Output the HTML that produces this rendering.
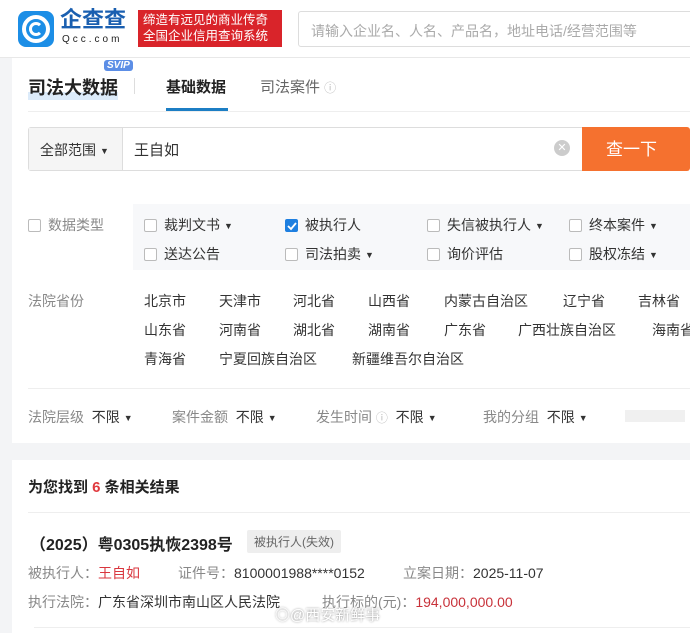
<!DOCTYPE html>
<html><head><meta charset="utf-8"><style>
*{margin:0;padding:0;box-sizing:border-box}
body{width:690px;height:633px;overflow:hidden;background:#f3f4f6;font-family:"Liberation Sans","Noto Sans CJK SC",sans-serif;color:#333;position:relative}
.a{position:absolute;white-space:nowrap}
.g{color:#888}
.cb{display:inline-block;width:13px;height:13px;border:1px solid #bbb;border-radius:2px;background:#fff;vertical-align:-2px;margin-right:7px}
.ck{background:#1e7fe0;border-color:#1e7fe0;position:relative}
.tri{font-size:9px;margin-left:4px;vertical-align:1px}
</style></head><body>
<div class="a" style="left:0;top:0;width:690px;height:58px;background:#fff;border-bottom:1px solid #e8e8e8"></div>
<div class="a" style="left:18px;top:11px;width:36px;height:36px;border-radius:8px;background:#1c8ee6"></div>
<div class="a" style="left:22px;top:15px;width:28px;height:28px;border-radius:50%;border:4px solid #fff"></div>
<div class="a" style="left:29px;top:22px;width:14px;height:14px;border-radius:50%;border:3px solid #fff;border-right-color:transparent"></div>
<div class="a" style="left:60px;top:5px;font-size:22px;line-height:30px;font-weight:bold;color:#1a5fb0">企查查</div>
<div class="a" style="left:62px;top:34px;font-size:10px;line-height:12px;letter-spacing:3px;color:#222">Qcc.com</div>
<div class="a" style="left:138px;top:10px;width:144px;height:37px;background:#d9242a;color:#fff;font-size:12.5px;line-height:16px;padding:2px 5px">缔造有远见的商业传奇<br>全国企业信用查询系统</div>
<div class="a" style="left:298px;top:11px;width:400px;height:36px;border:1px solid #ddd;border-radius:3px;padding:9px 12px;font-size:14px;color:#aaa">请输入企业名、人名、产品名，地址电话/经营范围等</div>
<div class="a" style="left:12px;top:58px;width:690px;height:385px;background:#fff"></div>
<div class="a" style="left:28px;top:74px;font-size:18px;font-weight:bold;color:#222;background:linear-gradient(transparent 70%,#dcebfa 70%)">司法大数据</div>
<div class="a" style="left:104px;top:60px;background:#5c8ee6;color:#fff;font-size:10px;font-weight:bold;font-style:italic;padding:0 3px;border-radius:3px">SVIP</div>
<div class="a" style="left:134px;top:78px;width:1px;height:16px;background:#ddd"></div>
<div class="a" style="left:166px;top:76px;font-size:15px;font-weight:bold;color:#222">基础数据</div>
<div class="a" style="left:166px;top:108px;width:62px;height:3px;background:#1c7ec4"></div>
<div class="a" style="left:260px;top:76px;font-size:15px;color:#666">司法案件 <span style="font-size:12px;color:#bbb">ⓘ</span></div>
<div class="a" style="left:28px;top:111px;width:662px;height:1px;background:#eee"></div>
<div class="a" style="left:28px;top:127px;width:556px;height:44px;border:1px solid #ddd;border-radius:3px"></div>
<div class="a" style="left:29px;top:128px;width:94px;height:42px;background:#f5f5f5;border-right:1px solid #ddd;font-size:14px;padding:12px 11px">全部范围<span class="tri">▼</span></div>
<div class="a" style="left:134px;top:139px;font-size:15px">王自如</div>
<div class="a" style="left:554px;top:140px;width:16px;height:16px;border-radius:50%;background:#ccc;color:#fff;font-size:11px;text-align:center;line-height:16px">✕</div>
<div class="a" style="left:582px;top:127px;width:108px;height:44px;background:#f5712f;color:#fff;font-size:17px;padding:8px 24px;border-radius:0 3px 3px 0">查一下</div>
<div class="a" style="left:133px;top:204px;width:557px;height:66px;background:#f7f8fa"></div>
<div class="a g" style="left:28px;top:215px;font-size:14px"><span class="cb"></span>数据类型</div>
<div class="a" style="left:144px;top:215px;font-size:14px"><span class="cb"></span>裁判文书<span class="tri">▼</span></div>
<div class="a" style="left:285px;top:215px;font-size:14px"><span class="cb ck"><svg width="11" height="11" style="position:absolute;left:0;top:0"><path d="M2 6l3 3 5-6" stroke="#fff" stroke-width="1.8" fill="none"/></svg></span>被执行人</div>
<div class="a" style="left:427px;top:215px;font-size:14px"><span class="cb"></span>失信被执行人<span class="tri">▼</span></div>
<div class="a" style="left:569px;top:215px;font-size:14px"><span class="cb"></span>终本案件<span class="tri">▼</span></div>
<div class="a" style="left:144px;top:244px;font-size:14px"><span class="cb"></span>送达公告</div>
<div class="a" style="left:285px;top:244px;font-size:14px"><span class="cb"></span>司法拍卖<span class="tri">▼</span></div>
<div class="a" style="left:427px;top:244px;font-size:14px"><span class="cb"></span>询价评估</div>
<div class="a" style="left:569px;top:244px;font-size:14px"><span class="cb"></span>股权冻结<span class="tri">▼</span></div>
<div class="a g" style="left:28px;top:291px;font-size:14px">法院省份</div>
<div class="a" style="left:144px;top:291px;font-size:14px">北京市</div>
<div class="a" style="left:219px;top:291px;font-size:14px">天津市</div>
<div class="a" style="left:293px;top:291px;font-size:14px">河北省</div>
<div class="a" style="left:368px;top:291px;font-size:14px">山西省</div>
<div class="a" style="left:444px;top:291px;font-size:14px">内蒙古自治区</div>
<div class="a" style="left:563px;top:291px;font-size:14px">辽宁省</div>
<div class="a" style="left:638px;top:291px;font-size:14px">吉林省</div>
<div class="a" style="left:144px;top:320px;font-size:14px">山东省</div>
<div class="a" style="left:219px;top:320px;font-size:14px">河南省</div>
<div class="a" style="left:293px;top:320px;font-size:14px">湖北省</div>
<div class="a" style="left:368px;top:320px;font-size:14px">湖南省</div>
<div class="a" style="left:444px;top:320px;font-size:14px">广东省</div>
<div class="a" style="left:518px;top:320px;font-size:14px">广西壮族自治区</div>
<div class="a" style="left:652px;top:320px;font-size:14px">海南省</div>
<div class="a" style="left:144px;top:349px;font-size:14px">青海省</div>
<div class="a" style="left:219px;top:349px;font-size:14px">宁夏回族自治区</div>
<div class="a" style="left:352px;top:349px;font-size:14px">新疆维吾尔自治区</div>
<div class="a" style="left:28px;top:388px;width:662px;height:1px;background:#eee"></div>
<div class="a" style="left:28px;top:407px;font-size:14px"><span class="g">法院层级</span>&nbsp; 不限<span class="tri">▼</span></div>
<div class="a" style="left:172px;top:407px;font-size:14px"><span class="g">案件金额</span>&nbsp; 不限<span class="tri">▼</span></div>
<div class="a" style="left:316px;top:407px;font-size:14px"><span class="g">发生时间 <span style="font-size:12px;color:#bbb">ⓘ</span></span>&nbsp; 不限<span class="tri">▼</span></div>
<div class="a" style="left:483px;top:407px;font-size:14px"><span class="g">我的分组</span>&nbsp; 不限<span class="tri">▼</span></div>
<div class="a" style="left:625px;top:410px;width:60px;height:12px;background:#f0f0f0"></div>
<div class="a" style="left:12px;top:460px;width:690px;height:173px;background:#fff"></div>
<div class="a" style="left:28px;top:476px;font-size:15px;font-weight:bold;color:#222">为您找到 <span style="color:#e0393e">6</span> 条相关结果</div>
<div class="a" style="left:28px;top:512px;width:662px;height:1px;background:#eee"></div>
<div class="a" style="left:30px;top:531px;font-size:16px;font-weight:bold;color:#222">（2025）粤0305执恢2398号</div>
<div class="a" style="left:247px;top:530px;background:#eee;color:#666;font-size:12px;padding:3px 7px;border-radius:2px">被执行人(失效)</div>
<div class="a" style="left:28px;top:563px;font-size:14px"><span class="g">被执行人：</span><span style="color:#d9363e">王自如</span></div>
<div class="a" style="left:178px;top:563px;font-size:14px"><span class="g">证件号：</span>8100001988****0152</div>
<div class="a" style="left:403px;top:563px;font-size:14px"><span class="g">立案日期：</span>2025-11-07</div>
<div class="a" style="left:28px;top:592px;font-size:14px"><span class="g">执行法院：</span>广东省深圳市南山区人民法院</div>
<div class="a" style="left:322px;top:592px;font-size:14px"><span class="g">执行标的(元)：</span><span style="color:#c8323a">194,000,000.00</span></div>
<div class="a" style="left:275px;top:604px;font-size:15px;color:#fff;text-shadow:0 0 2px #888">◎@西安新鲜事</div>
<div class="a" style="left:34px;top:627px;width:656px;height:1px;background:#eee"></div>
</body></html>
